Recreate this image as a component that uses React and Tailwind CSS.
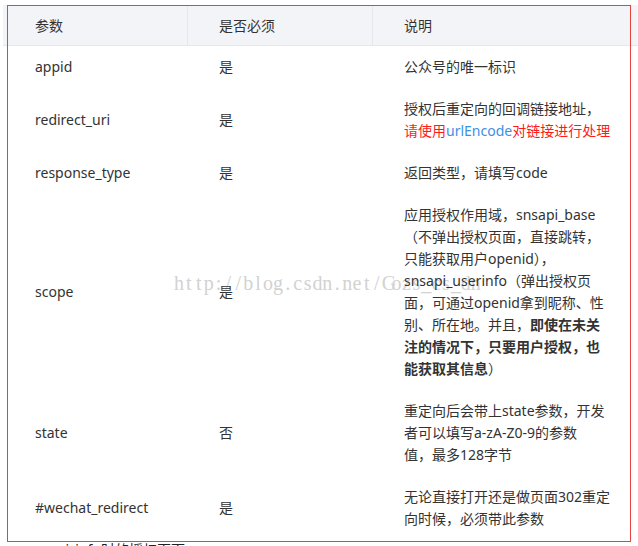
import React from "react";

const WM = "http://blog.csdn.net/Gozs_cs_dn";

function Line({ children }) {
  return <div className="whitespace-nowrap leading-[22px]">{children}</div>;
}

function Row({ name, req, children }) {
  return (
    <div className="grid grid-cols-[185px_185px_1fr] items-center">
      <div className="pl-[32px] leading-[22px]">{name}</div>
      <div className="pl-[31px] leading-[22px]">{req}</div>
      <div className="pl-[31px] py-[10px]">{children}</div>
    </div>
  );
}

export default function App() {
  return (
    <div className="relative h-[546px] w-[638px] overflow-hidden bg-white font-['Noto_Sans','Noto_Sans_CJK_SC',sans-serif] text-[14px] text-[#333333]">
      {/* watermark */}
      <div className="pointer-events-none absolute left-[174px] top-[273px] z-0 flex font-['Liberation_Serif','Noto_Serif',serif] text-[20px] leading-[20px] text-[#d2d2d2]">
        {WM.split("").map((c, i) => (
          <span key={i} className="inline-block w-[9.9px] text-center">
            {c}
          </span>
        ))}
      </div>

      <div className="relative z-10 pl-[3px] pt-[5px]">
        {/* header */}
        <div className="grid h-[41px] grid-cols-[185px_185px_1fr] items-center border-b border-[#e5e7ec] bg-[#f3f4f8]">
          <div className="flex h-full items-center border-r border-[#e5e7ec] pl-[32px]">参数</div>
          <div className="flex h-full items-center border-r border-[#e5e7ec] pl-[31px]">是否必须</div>
          <div className="flex h-full items-center pl-[31px]">说明</div>
        </div>

        <Row name="appid" req="是">
          <Line>公众号的唯一标识</Line>
        </Row>
        <Row name="redirect_uri" req="是">
          <Line>授权后重定向的回调链接地址，</Line>
          <Line>
            <span className="text-[#ff1a1a]">请使用</span>
            <span className="text-[#3d8fe6]">urlEncode</span>
            <span className="text-[#ff1a1a]">对链接进行处理</span>
          </Line>
        </Row>
        <Row name="response_type" req="是">
          <Line>返回类型，请填写code</Line>
        </Row>
        <Row name="scope" req="是">
          <Line>应用授权作用域，snsapi_base</Line>
          <Line>（不弹出授权页面，直接跳转，</Line>
          <Line>只能获取用户openid），</Line>
          <Line>snsapi_userinfo（弹出授权页</Line>
          <Line>面，可通过openid拿到昵称、性</Line>
          <Line>
            别、所在地。并且，<b className="font-bold">即使在未关</b>
          </Line>
          <Line>
            <b className="font-bold">注的情况下，只要用户授权，也</b>
          </Line>
          <Line>
            <b className="font-bold">能获取其信息</b>）
          </Line>
        </Row>
        <Row name="state" req="否">
          <Line>重定向后会带上state参数，开发</Line>
          <Line>者可以填写a-zA-Z0-9的参数</Line>
          <Line>值，最多128字节</Line>
        </Row>
        <Row name="#wechat_redirect" req="是">
          <Line>无论直接打开还是做页面302重定</Line>
          <Line>向时候，必须带此参数</Line>
        </Row>

        <div className="whitespace-nowrap pl-[24px] leading-[20px] text-[#222222]">
          snsapi_info时的授权页面
        </div>
      </div>

      {/* red annotation frame */}
      <div className="pointer-events-none absolute left-[7px] top-[5px] z-20 h-[537px] w-[624px] border border-[#e8403c]" />
    </div>
  );
}
